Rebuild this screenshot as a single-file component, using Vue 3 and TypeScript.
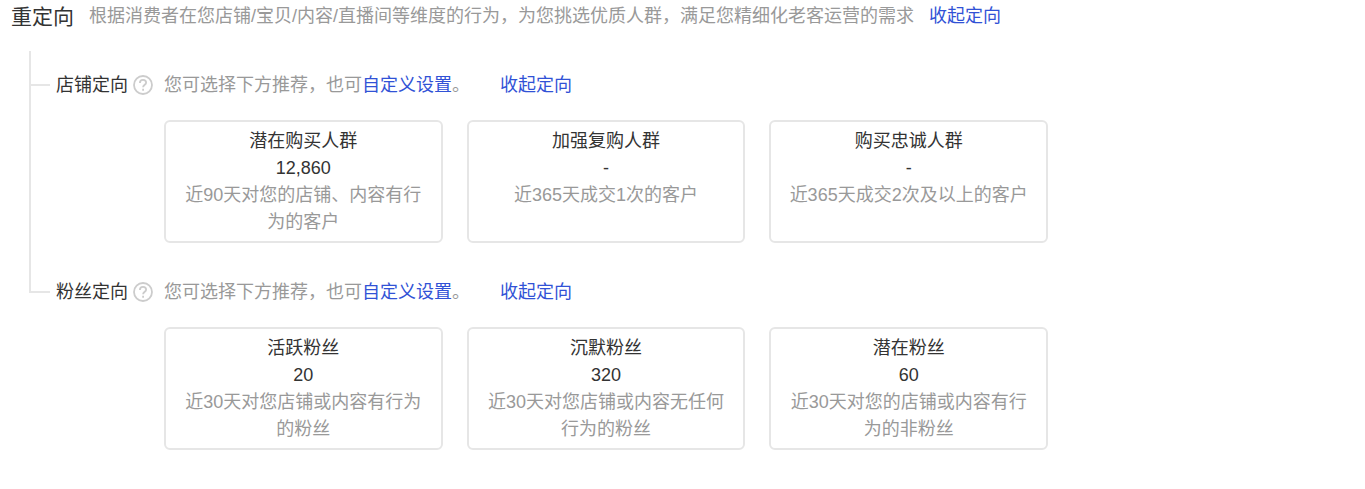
<script setup lang="ts">
interface Card {
  title: string
  count: string
  note: string
}

interface Group {
  name: string
  cards: Card[]
}

const groups: Group[] = [
  {
    name: '店铺定向',
    cards: [
      { title: '潜在购买人群', count: '12,860', note: '近90天对您的店铺、内容有行为的客户' },
      { title: '加强复购人群', count: '-', note: '近365天成交1次的客户' },
      { title: '购买忠诚人群', count: '-', note: '近365天成交2次及以上的客户' },
    ],
  },
  {
    name: '粉丝定向',
    cards: [
      { title: '活跃粉丝', count: '20', note: '近30天对您店铺或内容有行为的粉丝' },
      { title: '沉默粉丝', count: '320', note: '近30天对您店铺或内容无任何行为的粉丝' },
      { title: '潜在粉丝', count: '60', note: '近30天对您的店铺或内容有行为的非粉丝' },
    ],
  },
]
</script>

<template>
  <main class="page">
    <header class="head">
      <h1 class="title">重定向</h1>
      <p class="desc">根据消费者在您店铺/宝贝/内容/直播间等维度的行为，为您挑选优质人群，满足您精细化老客运营的需求</p>
      <a class="link" href="#">收起定向</a>
    </header>

    <div class="tree">
      <section v-for="group in groups" :key="group.name" class="group">
        <div class="row">
          <h2 class="name">{{ group.name }}</h2>
          <button class="help" type="button" :aria-label="group.name + '说明'">
            <svg viewBox="0 0 20 20" width="20" height="20" fill="none" stroke="#ccc" stroke-width="1.8">
              <circle cx="10" cy="10" r="9" />
              <path d="M6.9 8.1C6.9 6 8.2 4.9 10 4.9s3.1 1.1 3.1 2.8c0 2-3 2.2-3 4.6" />
              <path d="M10.1 13.7v2" />
            </svg>
          </button>
          <p class="hint">您可选择下方推荐，也可<a class="link" href="#">自定义设置</a>。</p>
          <a class="link fold" href="#">收起定向</a>
        </div>
        <div class="cards">
          <button v-for="card in group.cards" :key="card.title" class="card" type="button">
            <span>{{ card.title }}</span>
            <span>{{ card.count }}</span>
            <span class="card-note">{{ card.note }}</span>
          </button>
        </div>
      </section>
    </div>
  </main>
</template>

<style>
body {
  margin: 0;
  background: #fff;
}
</style>

<style scoped>
.page {
  font-family: "Liberation Sans", "Noto Sans CJK SC", sans-serif;
  font-size: 18px;
  line-height: 27px;
  color: #333;
  padding: 3px 11px 0;
}
.head {
  display: flex;
  align-items: center;
  white-space: nowrap;
}
.title {
  margin: 0 15px 0 0;
  font-size: 21px;
  line-height: 24px;
  font-weight: 400;
}
.desc {
  margin: 0 15px 0 0;
  color: #999;
}
.link {
  color: #3152d6;
  text-decoration: none;
}
.tree {
  padding: 21px 0 0 18px;
}
.group {
  position: relative;
  padding: 20px 0 15px 27px;
}
.group::before {
  content: "";
  position: absolute;
  left: 0;
  top: 0;
  bottom: 0;
  border-left: 2px solid #e6e6e6;
}
.group:last-child::before {
  bottom: auto;
  height: 35px;
}
.group::after {
  content: "";
  position: absolute;
  left: 0;
  top: 33px;
  width: 21px;
  border-top: 2px solid #e6e6e6;
}
.row {
  display: flex;
  align-items: center;
  height: 28px;
  white-space: nowrap;
}
.name {
  margin: 0;
  font-size: 18px;
  font-weight: 400;
}
.help {
  display: flex;
  margin: 0 11px 0 5px;
  padding: 0;
  border: 0;
  background: none;
}
.hint {
  margin: 0;
  color: #999;
}
.fold {
  margin-left: 30px;
}
.cards {
  display: grid;
  grid-template-columns: repeat(3, 1fr);
  gap: 24px;
  max-width: 884px;
  margin: 21px 0 0 108px;
}
.card {
  display: flex;
  flex-direction: column;
  align-items: center;
  padding: 6px 18px 5px;
  border: 2px solid #e6e6e6;
  border-radius: 6px;
  background: #fff;
  font: inherit;
  color: #333;
  text-align: center;
}
.card-note {
  color: #999;
}
</style>
